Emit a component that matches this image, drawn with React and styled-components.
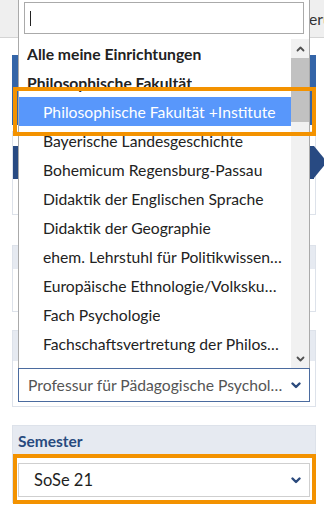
import React from "react";
import styled, { createGlobalStyle } from "styled-components";

const GlobalStyle = createGlobalStyle`
  html, body { margin: 0; padding: 0; background: #fff; overflow: hidden; }
  body { font-family: Lato, "Noto Sans", "Liberation Sans", sans-serif; }
  #root { position: relative; }
  * { box-sizing: border-box; }
`;

const Page = styled.div`
  position: relative;
  width: 324px;
  height: 515px;
  overflow: hidden;
  background: #fff;
  font-family: Lato, "Noto Sans", "Liberation Sans", sans-serif;
`;

const TopBar = styled.div`
  height: 38px;
  background: #efefef;
  border-bottom: 1px solid #d4d4d4;
  display: flex;
  align-items: center;
  padding-left: 309px;
  overflow: hidden;
  white-space: nowrap;
  font-size: 15.7px;
  color: #333;
`;

const Content = styled.div`
  display: flex;
  flex-direction: column;
  padding: 0 8px 0 12px;
`;

const BlueBlock = styled.div`
  margin-top: 17px;
  height: 70px;
  background: #3465a8;
`;

const StepBox = styled.div`
  margin-top: 6px;
  height: 84px;
  border: 1px solid #dde2ea;
  padding-top: 14px;
`;

const StepBar = styled.div`
  position: relative;
  height: 33px;
  background: #284a82;
  margin-right: 1px;
  &::after {
    content: "";
    position: absolute;
    left: 100%;
    top: 0;
    border-left: 13px solid #284a82;
    border-top: 16.5px solid transparent;
    border-bottom: 16.5px solid transparent;
  }
`;

const Card = styled.div`
  margin-top: ${(p) => p.$gap}px;
  border: 1px solid #dde2ea;
  background: #fff;
  width: 304px;
`;

const CardHeader = styled.div`
  height: ${(p) => p.$h}px;
  background: #e6eaf1;
  display: flex;
  align-items: center;
  padding: 0 5px;
  font-size: 15.5px;
  font-weight: 700;
  color: #284a7e;
`;

const CardBody = styled.div`
  padding: ${(p) => p.$pad};
  min-height: ${(p) => p.$min || 0}px;
`;

const SelectBox = styled.div`
  height: 34px;
  border: 1px solid ${(p) => (p.$focus ? "#4b6b9f" : "#cfcfcf")};
  background: #fff;
  display: flex;
  align-items: center;
  padding: 0 8px 0 ${(p) => p.$padLeft}px;
  gap: 7px;
`;

const SelectText = styled.span`
  flex: 1;
  min-width: 0;
  white-space: nowrap;
  overflow: hidden;
  text-overflow: ellipsis;
  font-size: ${(p) => p.$size}px;
  color: ${(p) => p.$color};
`;

const Chevron = ({ color = "#2b4a7d" }) => (
  <svg width="10" height="7" viewBox="0 0 10 7">
    <polyline points="1.5,1.5 5,5 8.5,1.5" fill="none" stroke={color} strokeWidth="2.4" strokeLinecap="round" strokeLinejoin="round" />
  </svg>
);

const Dropdown = styled.div`
  position: absolute;
  left: 18px;
  top: -4px;
  width: 292px;
  background: #fff;
  border: 1px solid #aaa;
  border-bottom: none;
`;

const SearchWrap = styled.div`
  padding: 5px;
`;

const SearchField = styled.div`
  height: 32px;
  border: 1px solid #aaa;
  display: flex;
  align-items: center;
  padding-left: 5px;
`;

const Caret = styled.span`
  width: 1px;
  height: 15px;
  background: #222;
`;

const ListArea = styled.div`
  display: flex;
  height: 329px;
`;

const Options = styled.ul`
  flex: 1;
  min-width: 0;
  margin: 0;
  padding: 0;
  list-style: none;
  overflow: hidden;
`;

const Option = styled.li`
  height: 29px;
  display: flex;
  align-items: center;
  padding: 0 9px 0 ${(p) => (p.$indent ? 24 : 8)}px;
  font-size: 15.7px;
  font-weight: ${(p) => (p.$group ? 700 : 400)};
  color: ${(p) => (p.$active ? "#fff" : "#222")};
  background: ${(p) => (p.$active ? "#5897fb" : "transparent")};
  white-space: nowrap;
  overflow: hidden;
  span {
    overflow: hidden;
    text-overflow: ellipsis;
  }
`;

const Scrollbar = styled.div`
  width: 18px;
  background: #f1f1f1;
  display: flex;
  flex-direction: column;
  align-items: center;
`;

const ScrollBtn = styled.div`
  height: 19px;
  width: 100%;
  display: flex;
  align-items: center;
  justify-content: center;
`;

const Thumb = styled.div`
  width: 100%;
  height: 64px;
  background: #c1c1c1;
`;

const Track = styled.div`
  flex: 1;
`;

const Arrow = ({ up }) => (
  <svg width="9" height="6" viewBox="0 0 9 6">
    <polyline
      points={up ? "1.5,4.5 4.5,1.5 7.5,4.5" : "1.5,1.5 4.5,4.5 7.5,1.5"}
      fill="none"
      stroke="#505050"
      strokeWidth="1.8"
      strokeLinecap="round"
      strokeLinejoin="round"
    />
  </svg>
);

const Highlight = styled.div`
  position: absolute;
  left: 13px;
  top: ${(p) => p.$top}px;
  width: 303px;
  height: ${(p) => p.$h}px;
  border: 4px solid #f39200;
  pointer-events: none;
`;

const options = [
  { label: "Alle meine Einrichtungen", group: true },
  { label: "Philosophische Fakultät", group: true },
  { label: "Philosophische Fakultät +Institute", indent: true, active: true },
  { label: "Bayerische Landesgeschichte", indent: true },
  { label: "Bohemicum Regensburg-Passau", indent: true },
  { label: "Didaktik der Englischen Sprache", indent: true },
  { label: "Didaktik der Geographie", indent: true },
  { label: "ehem. Lehrstuhl für Politikwissenschaft", indent: true },
  { label: "Europäische Ethnologie/Volkskunde", indent: true },
  { label: "Fach Psychologie", indent: true },
  { label: "Fachschaftsvertretung der Philosophischen Fakultät", indent: true },
];

export default function App() {
  return (
    <Page>
      <GlobalStyle />
      <TopBar>erungen</TopBar>
      <Content>
        <BlueBlock />
        <StepBox>
          <StepBar />
        </StepBox>
        <Card $gap={30}>
          <CardHeader $h={23} />
          <CardBody $pad="0" $min={42} />
        </Card>
        <Card $gap={18}>
          <CardHeader $h={30} />
          <CardBody $pad="7px 5px 4px 5px">
            <SelectBox $focus $padLeft={9}>
              <SelectText $size={15.7} $color="#555">Professur für Pädagogische Psychologie</SelectText>
              <Chevron />
            </SelectBox>
          </CardBody>
        </Card>
        <Card $gap={18}>
          <CardHeader $h={30}>Semester</CardHeader>
          <CardBody $pad="7px 5px 5px 5px">
            <SelectBox $padLeft={15}>
              <SelectText $size={16.5} $color="#1e1e1e">SoSe 21</SelectText>
              <Chevron />
            </SelectBox>
          </CardBody>
        </Card>
      </Content>

      <Dropdown>
        <SearchWrap>
          <SearchField>
            <Caret />
          </SearchField>
        </SearchWrap>
        <ListArea>
          <Options>
            {options.map((o) => (
              <Option key={o.label} $group={o.group} $indent={o.indent} $active={o.active}>
                <span>{o.label}</span>
              </Option>
            ))}
          </Options>
          <Scrollbar>
            <ScrollBtn>
              <Arrow up />
            </ScrollBtn>
            <Thumb />
            <Track />
            <ScrollBtn>
              <Arrow />
            </ScrollBtn>
          </Scrollbar>
        </ListArea>
      </Dropdown>

      <Highlight $top={87} $h={49} />
      <Highlight $top={454} $h={50} />
    </Page>
  );
}
